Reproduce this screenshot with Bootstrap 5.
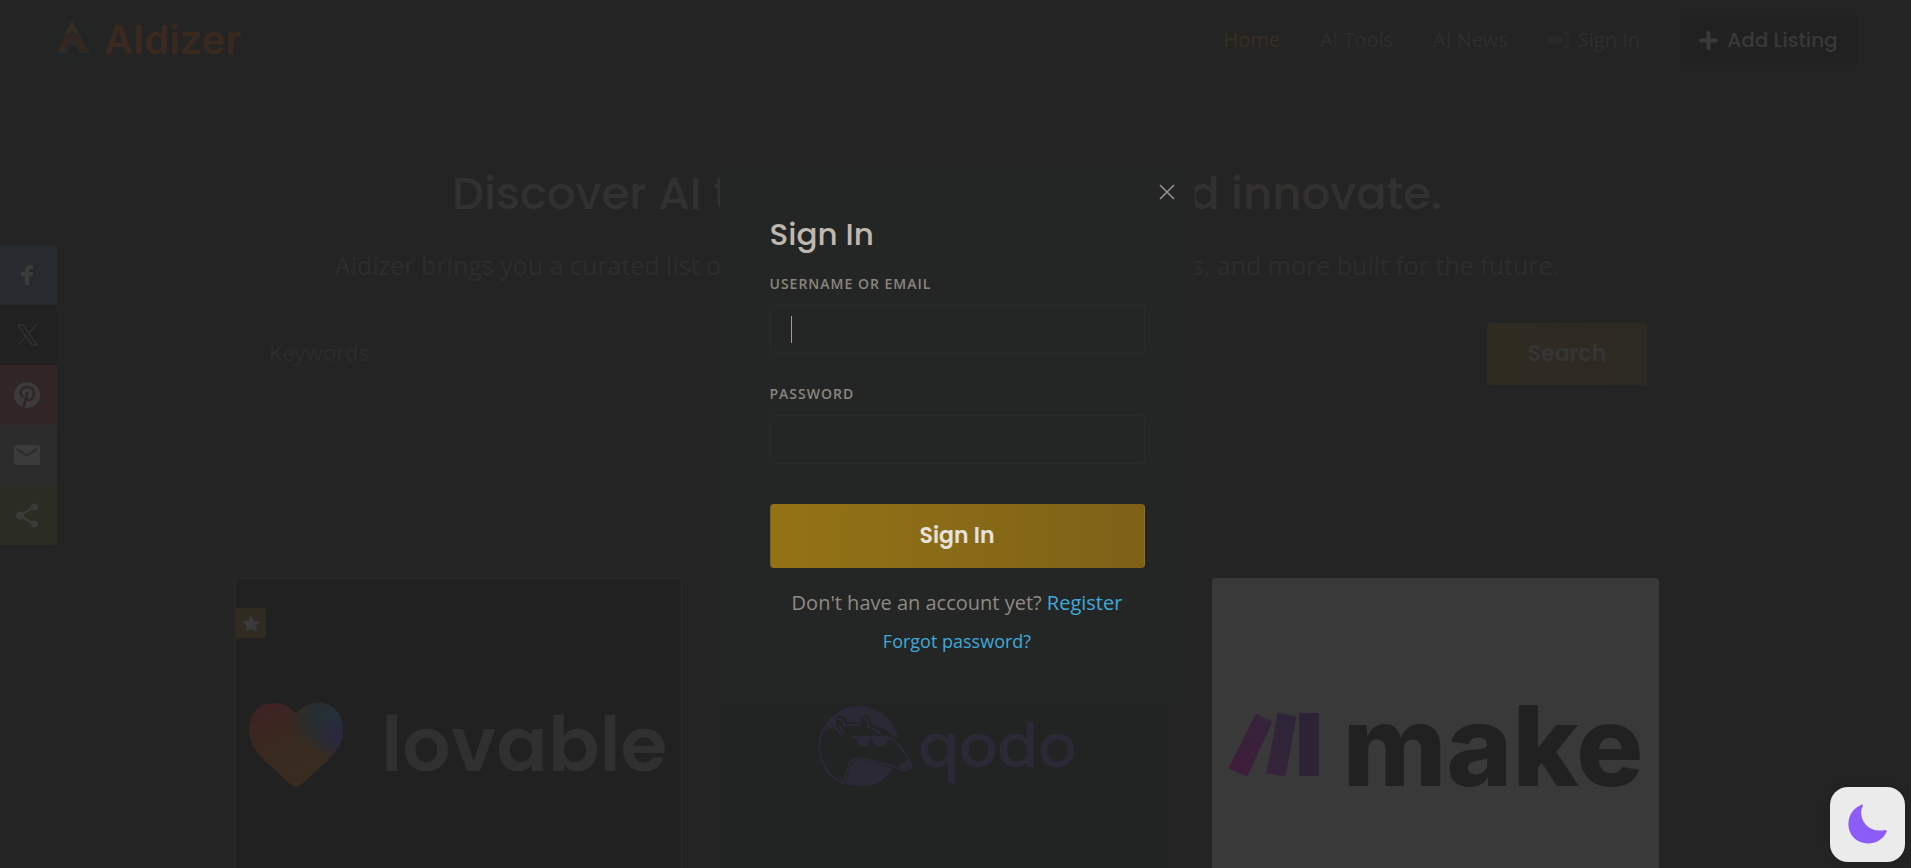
<!DOCTYPE html>
<html lang="en">
<head>
<meta charset="utf-8">
<meta name="viewport" content="width=device-width, initial-scale=1">
<title>AIdizer</title>
<link href="https://cdn.jsdelivr.net/npm/bootstrap@5.3.0/dist/css/bootstrap.min.css" rel="stylesheet">
<style>
  body { background: #242424; color: #2d2d2d; font-family: "Open Sans", sans-serif; font-size: 20px; height: 100vh; overflow: hidden; }
  a { text-decoration: none; }
  .display-face { font-family: Poppins, Inter, sans-serif; font-weight: 500; }
  .page { padding-right: 17px; height: 100vh; overflow: hidden; }

  /* header */
  .topbar { height: 80px; padding: 0 37px 0 50px; }
  .brand-name { font-family: Inter, sans-serif; font-weight: 600; font-size: 40px; line-height: 48px; color: #39291f; }
  .brand-link { gap: 8px; }
  .menu { gap: 40px; }
  .menu a { color: #2e2e2e; line-height: 30px; }
  .menu a.active { color: #373020; }
  .btn-listing { background: #212121; color: #393939; width: 177px; height: 50px; font-size: 20px; padding: 0; border-radius: 3px; gap: 9px; }

  /* hero */
  .content-col { width: calc(100% - 470px); max-width: 1424px; margin: 0 auto; }
  .hero h1 { font-size: 45px; line-height: 60px; color: #32312f; margin: 0; padding-top: 84px; }
  .hero p { font-size: 25px; line-height: 38px; color: #2d2d2d; margin: 22px 0 0; white-space: nowrap; }
  .search-bar { margin-top: 26px; padding: 13px 12px 12px 34px; }
  .search-bar .form-control { background: transparent; border: 0; padding: 0 0 4px; font-size: 22px; color: #2d2d2d; box-shadow: none; }
  .search-bar .form-control::placeholder { color: #2c2c2c; opacity: 1; }
  .btn-search { background: linear-gradient(90deg, #2f2b21, #2d2a23); color: #353535; width: 160px; height: 62px; padding: 0 0 2px; font-size: 22px; font-weight: 600; border-radius: 4px; flex: none; }

  /* listing cards */
  .tools { display: grid; grid-template-columns: repeat(3, 1fr); gap: 42px; margin-top: 181px; }
  .tool { aspect-ratio: 4 / 3; border-radius: 4px; border: 1px solid transparent; color: inherit; }
  .tool-lovable { background: #212121; border-color: #2d2b23; gap: 38px; }
  .tool-qodo { background: #222423; color: #2c2936; gap: 5px; }
  .tool-make { background: #393939; gap: 23px; }
  .word { line-height: 1; }
  .word-lovable { font-family: Poppins, sans-serif; font-size: 76px; font-weight: 600; color: #303030; }
  .word-qodo { font-family: Poppins, sans-serif; font-size: 60px; font-weight: 500; }
  .word-make { font-family: Inter, sans-serif; font-size: 112px; font-weight: 800; color: #212121; }
  .featured { position: absolute; left: 0; top: 29px; width: 30px; height: 30px; background: #2f2b21; border-radius: 0 3px 3px 0; }

  /* share rail */
  .share { position: fixed; left: 0; top: 245px; width: 57px; border-radius: 0 4px 4px 0; overflow: hidden; }
  .share a { height: 60px; padding-right: 3px; color: #3b3b3b; }

  /* sign-in dialog */
  .dialog-layer { position: fixed; inset: 0; padding: 164px 0 0 3px; }
  .dialog { width: 475px; height: 540px; padding: 34px 50px 0; background: #242625; border-radius: 4px; }
  .dialog h2 { font-size: 31px; line-height: 44px; color: #bfb8af; margin: 0; padding-top: 14px; }
  .dialog label { display: block; font-size: 14px; font-weight: 600; line-height: 20px; letter-spacing: 1px; text-transform: uppercase; color: #8a857e; margin: 0 0 11px; }
  .dialog .form-control { background: transparent; border: 1px solid #292b2b; border-radius: 4px; height: 49px; padding: 0 20px; color: #bfb8af; box-shadow: none; }
  .caret { position: absolute; left: 21px; bottom: 11px; width: 1px; height: 27px; background: #a39c93; }
  .btn-signin { background: linear-gradient(90deg, #947315, #7e6118); color: #e6e1da; height: 64px; padding: 0 0 2px; font-size: 22px; font-weight: 600; border-radius: 4px; }
  .dialog p { color: #8f8a83; margin: 0; line-height: 30px; }
  .dialog p a { color: #3fa9dc; }
  .forgot { font-size: 18px; }
  .btn-x { position: absolute; right: 14px; top: 14px; width: 28px; height: 28px; padding: 0; border: 0; background: none; color: #99948c; }

  .theme-switch { position: fixed; right: 6px; bottom: 6px; width: 75px; height: 75px; padding: 0 0 2px; border: 0; border-radius: 18px; background: #ebebeb; box-shadow: 0 0 10px #00000026; }
</style>
</head>
<body>
<div class="page">
  <header class="topbar d-flex align-items-center justify-content-between">
    <a href="#" class="brand-link d-flex align-items-center">
      <svg width="46" height="48" viewBox="0 0 46 48" aria-hidden="true">
        <circle cx="23" cy="24" r="23" fill="#232424"/>
        <path d="M9 34h7l3-7h9l3 7h8v3h-9l-3-7h-7l-3 7H9z" fill="#292b2d"/>
        <path d="M22 5 38 35h-7l-4-8h-9l-3 8H8z" fill="#35291f"/>
        <path d="m22 5 7 13H15z" fill="#332d22"/>
        <path d="m22 15-5 10M22 15l5 10M22 15v10M19 17l-3 6M25 17l3 6" stroke="#242424" fill="none"/>
      </svg>
      <span class="brand-name">AIdizer</span>
    </a>
    <div class="d-flex align-items-center menu">
      <a href="#" class="active">Home</a>
      <a href="#">AI Tools</a>
      <a href="#">AI News</a>
      <a href="#" class="d-flex align-items-center gap-2">
        <svg width="22" height="18" viewBox="0 0 22 18" aria-hidden="true"><path d="M1 6h7V2l8 7-8 7v-4H1z" fill="#292929"/><path d="M14 2h4q2 0 2 2v10q0 2-2 2h-4" fill="none" stroke="#292929" stroke-width="2"/></svg>
        Sign In
      </a>
      <button type="button" class="btn btn-listing display-face d-flex align-items-center justify-content-center">
        <svg width="19" height="19" viewBox="0 0 19 19" aria-hidden="true"><path d="M9.500 2v15M2 9.500h15" stroke="currentColor" stroke-width="4" stroke-linecap="round"/></svg>
        Add Listing
      </button>
    </div>
  </header>

  <main class="content-col">
    <section class="hero text-center">
      <h1 class="display-face text-nowrap">Discover AI tools to learn, edit and innovate.</h1>
      <p class="d-flex justify-content-center">Aidizer brings you a curated list of AI tools for writing, design, code, movies, and more built for the future.</p>
    </section>
    <form class="search-bar d-flex align-items-center">
      <input type="text" class="form-control" placeholder="Keywords" aria-label="Keywords">
      <button type="button" class="btn btn-search display-face">Search</button>
    </form>

    <section class="tools">
      <a href="#" class="tool tool-lovable position-relative d-flex align-items-center justify-content-center">
        <span class="featured d-flex align-items-center justify-content-center">
          <svg width="18" height="17" viewBox="0 0 18 17" aria-hidden="true"><path d="m9 1 2.400 5 5.600.8-4 3.900 1 5.300-5-2.500L4 16l1-5.300-4-3.900L6.600 6z" fill="#3b3b3b" stroke="#3b3b3b" stroke-linejoin="round"/></svg>
        </span>
        <svg width="94" height="84" viewBox="0 0 94 84" aria-hidden="true">
          <defs>
            <linearGradient id="warm" x1="0" y1="0" x2=".6" y2="1"><stop offset="0" stop-color="#3f2124"/><stop offset=".5" stop-color="#39291f"/><stop offset="1" stop-color="#382d20"/></linearGradient>
            <radialGradient id="cool" cx=".9" cy=".16" r=".48"><stop offset="0" stop-color="#23303a"/><stop offset=".6" stop-color="#262f30" stop-opacity=".8"/><stop offset="1" stop-color="#262f30" stop-opacity="0"/></radialGradient>
            <radialGradient id="violet" cx=".98" cy=".4" r=".3"><stop offset="0" stop-color="#2a2642"/><stop offset="1" stop-color="#2a2642" stop-opacity="0"/></radialGradient>
            <path id="heart" d="M47 11C41 4 34 0 25 0 10 0 0 11 0 26c0 14 7 23 16 32l25 23q6 5 12 0l25-23c9-9 16-18 16-32C94 11 84 0 69 0 60 0 53 4 47 11z"/>
          </defs>
          <use href="#heart" fill="url(#warm)"/><use href="#heart" fill="url(#cool)"/><use href="#heart" fill="url(#violet)"/>
        </svg>
        <span class="word word-lovable">lovable</span>
      </a>
      <a href="#" class="tool tool-qodo d-flex align-items-center justify-content-center">
        <svg width="96" height="84" viewBox="0 0 96 84" fill="none" aria-hidden="true">
          <circle cx="41" cy="42" r="40" fill="#2c2936"/>
          <!-- face and snout -->
          <path d="M4 28Q10 21 16 20q0-8 6-8t7 6h12q1-7 6-7t6 9q11 3 20 10l6 3 18 29-7 6q-3 2-8 0Q58 58 45 56 34 55 32 64l-5 18Q2 72 2 43q0-9 2-15z" fill="#222423"/>
          <path d="M6 71A40 40 0 0 1 3 29" stroke="none"/>
          <path d="M27 80A40 40 0 0 1 5 26" stroke="#2c2936" stroke-width="2"/>
          <g stroke="#2c2936" stroke-width="2" stroke-linecap="round">
            <path d="M5 27q6-4 12-5l5 8M25 29l-3-6M17 22q-1-7 4-7t5 7q8-2 16-1-1-7 4-7t4 9q7 2 12 6"/>
            <path d="M73 34q11 8 21 28l-7 5Q64 58 46 55 34 53 31 61q-3 8-5 18"/>
          </g>
          <path d="M34 32h36l4 4q-3-1-5 1-2 6-7 6-6-1-8-8h-2q-2 8-7 8-6-1-7-8z" fill="#2c2936"/>
          <path d="m82 61 7-5 6 7-7 5-6-3q-3-2 0-4z" fill="#2c2936"/>
          <path d="M29 80q4-21 15-21 12 0 29 8-13 20-44 13z" fill="#2c2936"/>
        </svg>
        <span class="word word-qodo">qodo</span>
      </a>
      <a href="#" class="tool tool-make d-flex align-items-center justify-content-center">
        <svg width="92" height="66" viewBox="0 0 92 66" aria-hidden="true">
          <defs>
            <linearGradient id="mk1" x1="1" y1="0" x2="0" y2="1"><stop offset="0" stop-color="#33253a"/><stop offset="1" stop-color="#411c3b"/></linearGradient>
            <linearGradient id="mk2" x1="1" y1="0" x2="0" y2="1"><stop offset="0" stop-color="#2b2638"/><stop offset="1" stop-color="#38233a"/></linearGradient>
          </defs>
          <path d="M28 2 44 10 19 64 1 56z" fill="url(#mk1)" stroke="url(#mk1)" stroke-linejoin="round"/>
          <path d="M50 1 68 5 57 64 39 61z" fill="url(#mk2)" stroke="url(#mk2)" stroke-linejoin="round"/>
          <rect x="71" y="1" width="20" height="63" rx="1" fill="#2e2237"/>
        </svg>
        <span class="word word-make">make</span>
      </a>
    </section>
  </main>
</div>

<nav class="share d-flex flex-column" aria-label="Share">
  <a href="#" class="d-flex align-items-center justify-content-center" style="background:#272a2f" aria-label="Facebook"><svg width="12" height="20" viewBox="0 0 12 20"><path d="M4 20v-9H0V7h4V5q0-5 5-5h3v4H9.500Q8 4 8 5.500V7h4l-.6 4H8v9z" fill="currentColor"/></svg></a>
  <a href="#" class="d-flex align-items-center justify-content-center" style="background:#212121" aria-label="X"><svg width="21" height="22" viewBox="0 0 21 22" fill="none" stroke="currentColor"><path d="M1 1h5l14 20h-5zM20 0l-8 9M9 12l-8 9"/></svg></a>
  <a href="#" class="d-flex align-items-center justify-content-center" style="background:#312525" aria-label="Pinterest"><svg width="26" height="26" viewBox="0 0 26 26"><circle cx="13" cy="13" r="13" fill="currentColor"/><path d="M9 15.500C3 9 9 5 13.500 5c5 0 7 3.500 6.500 7-.5 4-3 6-5 6-1.500 0-3-1-3-2.500L13.500 10M12.500 14 9.500 26" fill="none" stroke="#312525" stroke-width="2.500"/></svg></a>
  <a href="#" class="d-flex align-items-center justify-content-center" style="background:#2c2c2c" aria-label="Email"><svg width="26" height="20" viewBox="0 0 26 20"><rect width="26" height="20" rx="2.500" fill="currentColor"/><path d="m3 4 10 6.500L23 4" fill="none" stroke="#2c2c2c" stroke-width="2.200"/></svg></a>
  <a href="#" class="d-flex align-items-center justify-content-center" style="background:#2b2c22" aria-label="More"><svg width="22" height="25" viewBox="0 0 22 25"><path d="M18 4 4 12.500 18 21" fill="none" stroke="currentColor" stroke-width="2.500"/><g fill="currentColor"><circle cx="18.500" cy="4" r="3.500"/><circle cx="4" cy="12.500" r="4"/><circle cx="18.500" cy="21" r="3.500"/></g></svg></a>
</nav>

<div class="dialog-layer d-flex justify-content-center align-items-start">
  <div class="dialog position-relative" role="dialog" aria-labelledby="signin-title">
    <button type="button" class="btn-x d-flex align-items-center justify-content-center" aria-label="Close"><svg width="16" height="16" viewBox="0 0 16 16"><path d="m1 1 14 14M15 1 1 15" stroke="currentColor" stroke-width="1.500"/></svg></button>
    <form>
      <h2 id="signin-title" class="display-face">Sign In</h2>
      <div class="position-relative" style="margin-top:18px">
        <label for="user">Username or Email</label>
        <input id="user" type="text" class="form-control">
        <span class="caret"></span>
      </div>
      <div style="margin-top:30px">
        <label for="pass">Password</label>
        <input id="pass" type="password" class="form-control">
      </div>
      <button type="button" class="btn btn-signin display-face w-100" style="margin-top:40px">Sign In</button>
      <p class="text-center" style="margin-top:20px">Don't have an account yet? <a href="#">Register</a></p>
      <p class="text-center mt-2"><a href="#" class="forgot">Forgot password?</a></p>
    </form>
  </div>
</div>

<button type="button" class="theme-switch d-flex align-items-center justify-content-center" aria-label="Dark mode">
  <svg width="40" height="40" viewBox="0 0 40 40"><path d="M15 1.500C9 12 18 30 37 26q2 0 1.500 2C32 42 14 42 6 34-4 24 0 6 13 1q2-1 2 .5z" fill="#8b5cf6"/></svg>
</button>
<script src="https://cdn.jsdelivr.net/npm/bootstrap@5.3.0/dist/js/bootstrap.bundle.min.js"></script>
</body>
</html>
